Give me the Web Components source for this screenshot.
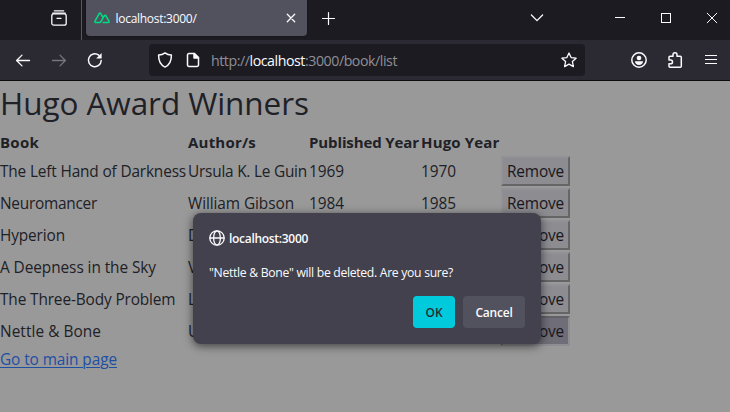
<!DOCTYPE html>
<html lang="en">
<head>
<meta charset="utf-8">
<title>Hugo Award Winners</title>
<style>
html,body{margin:0;height:100%;overflow:hidden}
body{font-family:"Open Sans","Noto Sans",sans-serif;background:#99999a}
</style>
</head>
<body>
<browser-window></browser-window>
<script>
// Text run whose tracking is adjusted so it spans the given advance width.
class FitText extends HTMLElement {
  connectedCallback() {
    if (!this.shadowRoot) this.attachShadow({mode:'open'}).innerHTML =
      '<style>:host{display:inline-block;white-space:pre;vertical-align:top}span{display:inline-block;text-decoration:var(--decoration,none);text-underline-offset:2px;text-decoration-thickness:1px}</style><span><slot></slot></span>';
    const s = this.shadowRoot.querySelector('span');
    s.style.letterSpacing = '0px';
    const target = +this.getAttribute('w');
    if (!target) return;
    const natural = s.getBoundingClientRect().width;
    s.style.letterSpacing = ((target - natural) / this.textContent.length) + 'px';
    this.style.width = target + 'px';
  }
}

const ICONS = {
  view: ['16','<path d="M3.3.8h9.4M1.7 3.2h12.6"/><rect x=".8" y="3.9" width="14.4" height="11.3" rx="2"/><path d="M6 8.3h4"/>'],
  nuxt: ['16','<path d="M9.2 12.4h5.2c.6 0 1-.6.7-1.1L11.7 5.5c-.3-.5-1-.5-1.3 0L6.8 11.8c-.3.4-.7.6-1.2.6H1.5c-.6 0-.9-.6-.6-1.1L5.3 3.4c.3-.5 1-.5 1.3 0l2.1 3.8"/>'],
  close: ['16','<path d="M4.3 4.3l7.4 7.4M11.7 4.3l-7.4 7.4"/>'],
  plus: ['16','<path d="M8.500 2.500v12M2.500 8.500h12"/>'],
  chevron: ['16','<path d="M2.4 5l5.6 5.6L13.6 5"/>'],
  min: ['16','<path d="M3 7.5h10" shape-rendering="crispEdges"/>'],
  max: ['16','<rect x="3.5" y="3.5" width="9" height="9" shape-rendering="crispEdges"/>'],
  winclose: ['16','<path d="M3.2 3.2l9.6 9.6M12.8 3.2L3.2 12.8"/>'],
  back: ['16','<path d="M14.5 8.500H1.7M7 3.100L1.6 8.500 7 13.9"/>'],
  forward: ['16','<path d="M1.5 8.500h12.8M9 3.100L14.4 8.500 9 13.9"/>'],
  reload: ['16','<path d="M14.2 8.5A6.4 6.4 0 1 1 11.7 3.2"/><path d="M14.6 1v5.5H9.1z" fill="currentColor" stroke="none"/>'],
  shield: ['16','<path d="M8 .9C6.3 2.2 4 3 1.6 3.1c-.1 5.4 1.4 9.8 6.4 12 5-2.2 6.5-6.6 6.4-12C12 3 9.7 2.2 8 .9z"/>'],
  page: ['16','<path d="M4 1.600h5.500l4 4v7.300a1.500 1.500 0 0 1-1.500 1.500H4a1.500 1.500 0 0 1-1.500-1.500V3.100A1.500 1.500 0 0 1 4 1.600z"/><path d="M9 1.600V6h4.500z" fill="currentColor"/>'],
  star: ['16','<path d="M8 1l2.1 4.600 5 .6-3.700 3.400 1 5L8 12.100l-4.400 2.500 1-5L.9 6.200l5-.6z"/>'],
  account: ['16','<circle cx="8" cy="8" r="7.200"/><circle cx="8" cy="6" r="2.300" fill="currentColor" stroke="none"/><path d="M3.900 9.300h8.200C12 11.500 10.200 13 8 13s-4-1.500-4.100-3.700z" fill="currentColor" stroke="none"/>'],
  puzzle: ['16','<path d="M2 8V5.200a1 1 0 0 1 1-1h3V2.800a2 2 0 0 1 4 0v1.400h3.300a1 1 0 0 1 1 1v9a1 1 0 0 1-1 1H3a1 1 0 0 1-1-1v-2.400h1.600a1.900 1.900 0 0 0 0-3.800z"/>'],
  menu: ['16','<path d="M2 3.500h12M2 7.500h12M2 11.500h12" shape-rendering="crispEdges"/>'],
  globe: ['16','<circle cx="8" cy="8" r="7.200"/><ellipse cx="8" cy="8" rx="3.400" ry="7.200"/><path d="M1 8h14"/>']
};
class UiIcon extends HTMLElement {
  connectedCallback() {
    if (this.shadowRoot) return;
    const [box, body] = ICONS[this.getAttribute('name')];
    const sw = this.getAttribute('weight') || '1.3';
    this.attachShadow({mode:'open'}).innerHTML =
      `<style>:host{display:block;width:16px;height:16px;flex:none}svg{display:block;width:100%;height:100%;overflow:visible}</style>
      <svg viewBox="0 0 ${box} ${box}" fill="none" stroke="currentColor" stroke-width="${sw}" stroke-linecap="round" stroke-linejoin="round">${body}</svg>`;
  }
}

class TabStrip extends HTMLElement {
  connectedCallback() {
    this.attachShadow({mode:'open'}).innerHTML = `<style>
      :host{display:flex;height:40px;background:#1c1b22;color:#fbfbfe;box-sizing:border-box}
      .view{width:82px;box-sizing:border-box;border-right:1px solid #5a5961;padding:10px 0 0 51px}
      .tab{margin-left:4px;width:221px;height:36px;box-sizing:border-box;padding:0 8px;background:#52525e;border-radius:0 0 4px 4px;display:flex;align-items:center;font-size:12px;box-shadow:0 0 2px #0008}
      .tab fit-text{margin-left:5.500px;line-height:18px;padding-top:1px}
      .tab .x{margin-left:auto}
      .new{margin:10px 0 0 13px}
      .chev{margin:10px 0 0 193px}
      .min{margin:10px 0 0 67px}.max{margin:10px 0 0 30px}.cl{margin:10px 0 0 30px}
    </style>
    <div class="view"><ui-icon name="view"></ui-icon></div>
    <div class="tab"><ui-icon name="nuxt" style="color:#00dc82" weight="1.5"></ui-icon><fit-text w="81">localhost:3000/</fit-text><ui-icon class="x" name="close"></ui-icon></div>
    <ui-icon class="new" name="plus" weight="1.2"></ui-icon>
    <ui-icon class="chev" name="chevron"></ui-icon>
    <ui-icon class="min" name="min" weight="1"></ui-icon>
    <ui-icon class="max" name="max" weight="1"></ui-icon>
    <ui-icon class="cl" name="winclose" weight="1"></ui-icon>`;
  }
}

class NavBar extends HTMLElement {
  connectedCallback() {
    this.attachShadow({mode:'open'}).innerHTML = `<style>
      :host{display:flex;align-items:center;height:41px;box-sizing:border-box;padding:0 11px 0 15px;background:#2b2a33;border-bottom:1px solid #0c0c0d;color:#fbfbfe}
      .fwd{margin-left:20px;color:#76757b}.re{margin-left:20px}
      .url{margin-left:46px;width:436px;height:32px;box-sizing:border-box;padding:0 8px;background:#1c1b22;border-radius:4px;display:flex;align-items:center;font-size:14.2px}
      .url .page{margin-left:12px}.url fit-text{margin-left:10px;color:#8f8f95;line-height:20px;padding-top:1px}
      b{font-weight:400;color:#fbfbfe}
      .star{margin-left:auto}
      .acct{margin-left:46px}.puz{margin-left:20px}.menu{margin-left:auto}
    </style>
    <ui-icon name="back"></ui-icon><ui-icon class="fwd" name="forward"></ui-icon><ui-icon class="re" name="reload" weight="1.5"></ui-icon>
    <div class="url"><ui-icon name="shield" weight="1.5"></ui-icon><ui-icon class="page" name="page" weight="1.5"></ui-icon>
      <fit-text w="186">http://<b>localhost</b>:3000/book/list</fit-text>
      <ui-icon class="star" name="star"></ui-icon></div>
    <ui-icon class="acct" name="account" weight="1.5"></ui-icon><ui-icon class="puz" name="puzzle" weight="1.5"></ui-icon><ui-icon class="menu" name="menu" weight="1"></ui-icon>`;
  }
}

class RemoveButton extends HTMLElement {
  connectedCallback() {
    this.attachShadow({mode:'open'}).innerHTML = `<style>
      :host{display:block}
      button{display:block;width:69px;height:30px;box-sizing:border-box;margin:0;padding:1px 0 0 4px;border:2px solid;border-color:#929296 #656567 #656567 #929296;background:#8d8c91;font:inherit;font-size:15.4px;line-height:26px;color:#17171b;text-align:left;border-radius:0}
      :host([pressed]) button{background:#6f6d77;border-color:#626168 #8e8d92 #8e8d92 #626168}
    </style><button><fit-text w="57">Remove</fit-text></button>`;
  }
}

class BookList extends HTMLElement {
  connectedCallback() {
    const books = [
      ['The Left Hand of Darkness',186,'Ursula K. Le Guin',119,'1969','1970'],
      ['Neuromancer',97,'William Gibson',106,'1984','1985'],
      ['Hyperion',65,'D',0,'',''],
      ['A Deepness in the Sky',156,'V',0,'',''],
      ['The Three-Body Problem',175.5,'L',0,'',''],
      ['Nettle & Bone',101,'U',0,'','']];
    const t = (s,w) => s ? `<fit-text w="${w}">${s.replace('&','&amp;')}</fit-text>` : '';
    this.attachShadow({mode:'open'}).innerHTML = `<style>
      :host{display:block;background:#99999a;color:#202126;font-size:15.4px;height:331px;overflow:hidden}
      h1{margin:0;font-size:31.5px;font-weight:400;line-height:38px;padding-top:3px;height:46px;box-sizing:border-box}
      .grid{display:grid;grid-template-columns:186px 119px 110px 78px 69px;gap:2px;padding-top:3px;grid-template-rows:24px repeat(6,30px)}
      .grid>*{white-space:nowrap}
      .c{line-height:30px;padding-top:1px}
      .h{font-weight:700;line-height:25px;font-size:15px}
      a{display:block;width:117px;margin-top:2px;color:#1d4fa3;--decoration:underline;line-height:24px}
    </style>
    <h1>${t('Hugo Award Winners',309)}</h1>
    <div class="grid">
      <div class="h">${t('Book',39)}</div><div class="h">${t('Author/s',68)}</div><div class="h">${t('Published Year',110)}</div><div class="h">${t('Hugo Year',78.5)}</div><div></div>
      ${books.map((b,i)=>`<div class="c">${t(b[0],b[1])}</div><div class="c">${t(b[2],b[3])}</div><div class="c">${t(b[4],35)}</div><div class="c">${t(b[5],35)}</div><remove-button ${i===5?'pressed':''}></remove-button>`).join('')}
    </div>
    <a>${t('Go to main page',117)}</a>`;
  }
}

class ConfirmDialog extends HTMLElement {
  connectedCallback() {
    this.attachShadow({mode:'open'}).innerHTML = `<style>
      :host{display:flex;flex-direction:column;width:348px;height:131px;box-sizing:border-box;padding:16px;background:#42414d;border-radius:8px;color:#fbfbfe;box-shadow:0 2px 10px #0009;font-size:12.2px}
      .origin{display:flex;align-items:center;gap:4px;height:17px;font-weight:600;font-size:12px}
      .origin fit-text{padding-top:1px}
      .msg{margin-top:18px;line-height:18px;height:18px}
      .actions{display:flex;justify-content:flex-end;gap:8px;margin-top:14px}
      button{height:32px;border:0;border-radius:4px;margin:0;padding:1px 0 0;font:600 12px/31px "Open Sans","Noto Sans",sans-serif;color:#fbfbfe;background:#52515e}
      .ok{width:42px;background:#00cadb;color:#2b2a33}.no{width:62px}
    </style>
    <div class="origin"><ui-icon name="globe"></ui-icon><fit-text w="79">localhost:3000</fit-text></div>
    <div class="msg"><fit-text w="244">"Nettle &amp; Bone" will be deleted. Are you sure?</fit-text></div>
    <div class="actions"><button class="ok"><fit-text w="17">OK</fit-text></button><button class="no"><fit-text w="37">Cancel</fit-text></button></div>`;
  }
}

class BrowserWindow extends HTMLElement {
  connectedCallback() {
    this.attachShadow({mode:'open'}).innerHTML = `<style>
      :host{display:block;position:relative;width:730px;height:412px;overflow:hidden}
      confirm-dialog{position:absolute;left:193px;top:213px}
    </style><tab-strip></tab-strip><nav-bar></nav-bar><book-list></book-list><confirm-dialog></confirm-dialog>`;
  }
}
customElements.define('fit-text', FitText);
customElements.define('ui-icon', UiIcon);
customElements.define('tab-strip', TabStrip);
customElements.define('nav-bar', NavBar);
customElements.define('remove-button', RemoveButton);
customElements.define('book-list', BookList);
customElements.define('confirm-dialog', ConfirmDialog);
customElements.define('browser-window', BrowserWindow);
</script>
</body>
</html>
